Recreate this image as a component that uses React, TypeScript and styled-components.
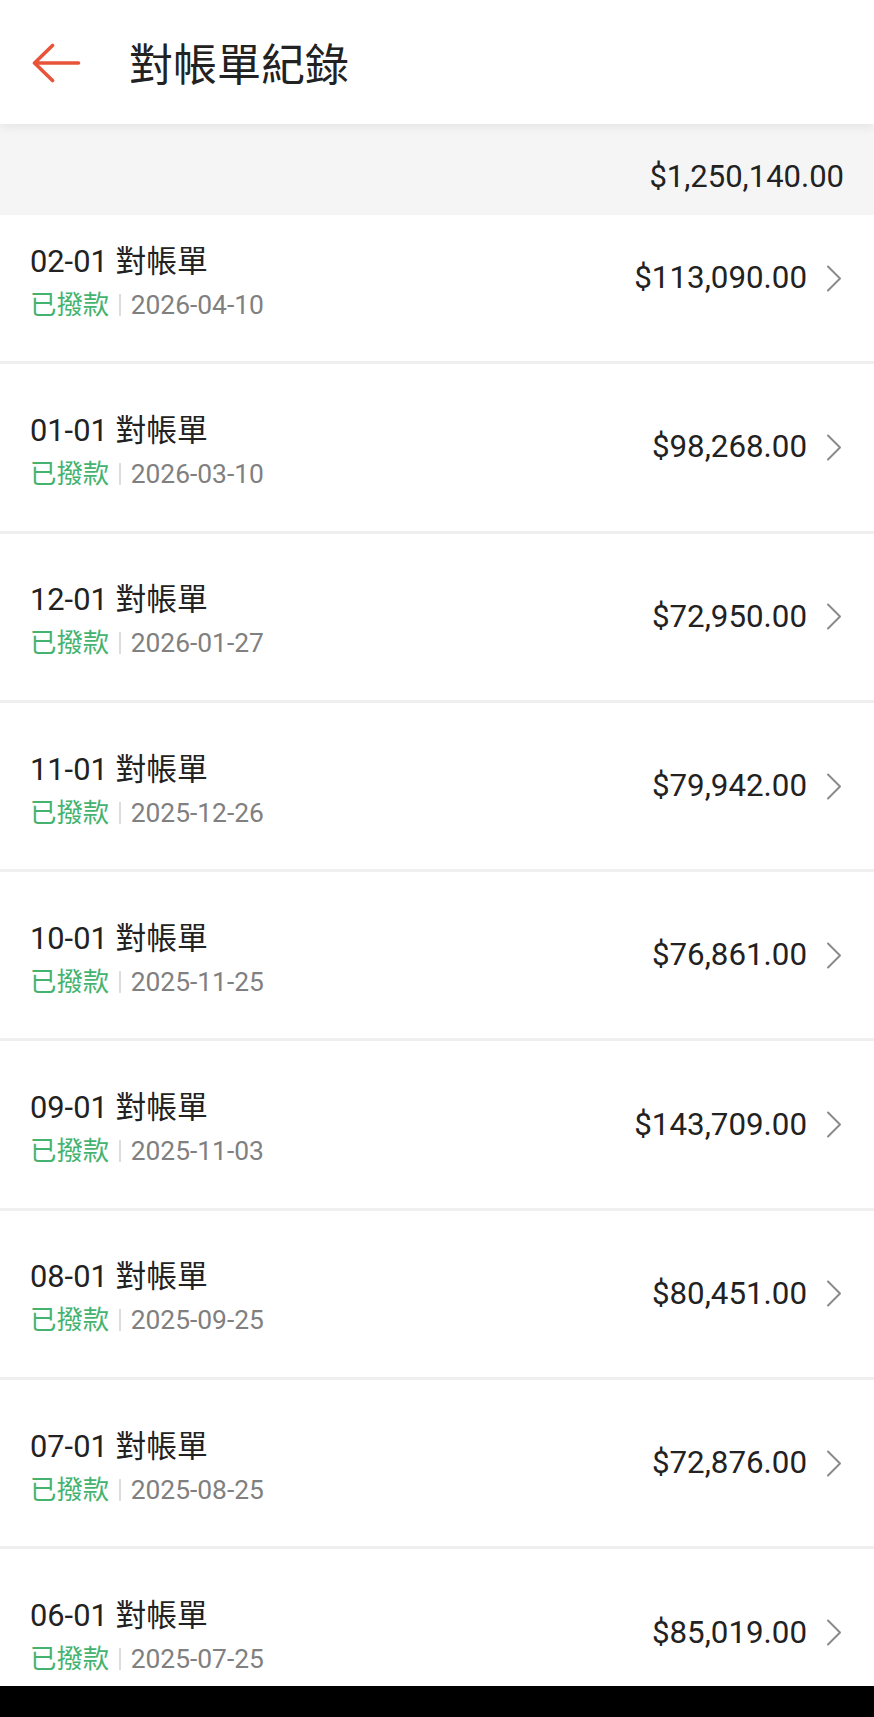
import React from "react";
import styled, { createGlobalStyle } from "styled-components";

const GlobalStyle = createGlobalStyle`
  * { box-sizing: border-box; }
  html, body { margin: 0; padding: 0; background: #ffffff; }
  body {
    font-family: Roboto, "Noto Sans CJK TC", "Noto Sans", sans-serif;
    -webkit-font-smoothing: antialiased;
  }
`;

const Screen = styled.div`
  width: 874px;
  height: 1717px;
  display: flex;
  flex-direction: column;
  overflow: hidden;
  background: #ffffff;
`;

const Header = styled.header`
  position: relative;
  z-index: 2;
  flex: 0 0 124px;
  display: flex;
  align-items: center;
  padding: 0 0 0 31px;
  background: #ffffff;
  box-shadow: 0 3px 10px rgba(0, 0, 0, 0.07);
`;

const BackButton = styled.button`
  display: flex;
  align-items: center;
  justify-content: center;
  width: 50px;
  height: 40px;
  margin-top: 2px;
  padding: 0;
  border: 0;
  background: transparent;
  cursor: pointer;
`;

const Title = styled.h1`
  margin: 0 0 0 48px;
  font-family: "Noto Sans CJK TC", "Noto Sans", sans-serif;
  font-size: 44px;
  font-weight: 400;
  line-height: 56px;
  color: #222222;
`;

const Summary = styled.div`
  flex: 0 0 91px;
  display: flex;
  align-items: center;
  justify-content: flex-end;
  padding: 15px 30px 0 0;
  background: #f5f5f5;
  font-size: 31px;
  line-height: 40px;
  color: #222222;
`;

const ListViewport = styled.div`
  flex: 1 1 auto;
  overflow: hidden;
  background: #ffffff;
`;

const List = styled.ul<{ $scroll: number }>`
  list-style: none;
  margin: ${(p) => -p.$scroll}px 0 0;
  padding: 0;
`;

const Row = styled.li`
  height: 169.3px;
  display: flex;
  align-items: center;
  justify-content: space-between;
  padding: 0 32px 0 30px;
  border-bottom: 3px solid #efefef;
  background: #ffffff;
`;

const Left = styled.div`
  display: flex;
  flex-direction: column;
  padding-top: 7px;
`;

const RowTitle = styled.div`
  font-size: 30.8px;
  line-height: 40px;
  color: #222222;
  white-space: nowrap;
`;

const Meta = styled.div`
  display: flex;
  align-items: center;
  margin-top: 6px;
  height: 34px;
  font-size: 26.4px;
  line-height: 34px;
  white-space: nowrap;
`;

const Status = styled.span`
  color: #45b370;
`;

const Divider = styled.span`
  width: 1.5px;
  height: 22px;
  margin: 0 10px 0 10px;
  background: #dddddd;
`;

const DateText = styled.span`
  color: #808080;
`;

const Right = styled.div`
  display: flex;
  align-items: center;
`;

const Amount = styled.span`
  font-size: 31.3px;
  line-height: 40px;
  color: #222222;
  white-space: nowrap;
`;

const Chevron = styled.svg`
  margin-left: 19px;
  flex: 0 0 auto;
`;

const NavBar = styled.div`
  flex: 0 0 31px;
  background: #000000;
`;

type Statement = { period: string; date: string; amount: string };

const statements: Statement[] = [
  { period: "02-01", date: "2026-04-10", amount: "$113,090.00" },
  { period: "01-01", date: "2026-03-10", amount: "$98,268.00" },
  { period: "12-01", date: "2026-01-27", amount: "$72,950.00" },
  { period: "11-01", date: "2025-12-26", amount: "$79,942.00" },
  { period: "10-01", date: "2025-11-25", amount: "$76,861.00" },
  { period: "09-01", date: "2025-11-03", amount: "$143,709.00" },
  { period: "08-01", date: "2025-09-25", amount: "$80,451.00" },
  { period: "07-01", date: "2025-08-25", amount: "$72,876.00" },
  { period: "06-01", date: "2025-07-25", amount: "$85,019.00" },
];

const BackArrow = () => (
  <svg width="50" height="40" viewBox="0 0 50 40" fill="none">
    <path
      d="M47.5 20H3.5M21.5 2.5L3.5 20L21.5 37.5"
      stroke="#e8543a"
      strokeWidth="3.6"
      strokeLinecap="round"
      strokeLinejoin="round"
    />
  </svg>
);

export default function App() {
  return (
    <>
      <GlobalStyle />
      <Screen>
        <Header>
          <BackButton aria-label="返回">
            <BackArrow />
          </BackButton>
          <Title>對帳單紀錄</Title>
        </Header>
        <Summary>$1,250,140.00</Summary>
        <ListViewport>
          <List $scroll={20}>
            {statements.map((s) => (
              <Row key={s.period + s.date}>
                <Left>
                  <RowTitle>{s.period} 對帳單</RowTitle>
                  <Meta>
                    <Status>已撥款</Status>
                    <Divider />
                    <DateText>{s.date}</DateText>
                  </Meta>
                </Left>
                <Right>
                  <Amount>{s.amount}</Amount>
                  <Chevron width="16" height="27" viewBox="0 0 16 27" fill="none">
                    <path
                      d="M2 1.5L14 13.5L2 25.5"
                      stroke="#8a8a8a"
                      strokeWidth="2"
                      strokeLinecap="round"
                      strokeLinejoin="round"
                    />
                  </Chevron>
                </Right>
              </Row>
            ))}
          </List>
        </ListViewport>
        <NavBar />
      </Screen>
    </>
  );
}
